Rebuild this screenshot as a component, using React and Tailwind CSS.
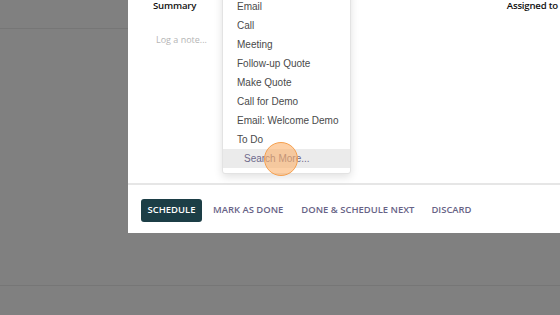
const TYPES = ['Email', 'Call', 'Meeting', 'Follow-up Quote', 'Make Quote', 'Call for Demo', 'Email: Welcome Demo', 'To Do']

export default function App() {
  return (
    <div className="relative w-[560px] h-[315px] overflow-hidden bg-[#808080]" style={{ fontFamily: '"Open Sans", sans-serif' }}>
      {/* page behind the backdrop */}
      <div className="h-[29px] border-b border-[#767676]" />
      <div className="h-[257px] border-b border-[#767676]" />

      {/* activity dialog */}
      <div className="absolute left-[128px] top-[-20px] right-[-20px] h-[253px] bg-white flex flex-col">
        <div className="relative h-[205px] border-b-2 border-[#e6e6e6]">
          <div className="flex items-start pt-[17px] pl-[25px] pr-[20px]">
            <span className="text-[9.6px] text-[#111] font-semibold leading-[18px] tracking-[-0.2px]">Summary</span>
            <span className="ml-auto mr-[2px] text-[9.6px] text-[#111] font-semibold leading-[18px] tracking-[-0.2px]">Assigned to</span>
          </div>
          <div className="pl-[28px] mt-[18px] text-[9px] text-[#b5b5b5] leading-[14px]">Log a note...</div>

          {/* activity type dropdown */}
          <div
            className="absolute left-[94px] top-[6px] w-[129px] bg-white border border-[#e3e3e3] rounded-[3px] shadow-[0_3px_8px_rgba(0,0,0,0.12)] pt-[10px] pb-[5px]"
            style={{ fontFamily: '"Liberation Sans", Arial, sans-serif' }}
          >
            {TYPES.map(t => (
              <div key={t} className="h-[19px] pl-[14px] flex items-center text-[10px] text-[#4a4a4a]">{t}</div>
            ))}
            <div className="relative h-[19px] pl-[21px] flex items-center text-[10px] text-[#6f6a8c] bg-[#ebebeb]">
              Search More...
              <div className="absolute left-[41px] top-[-7px] w-[34px] h-[34px] rounded-full bg-[#fbb06b]/60 border border-[#f5a04f]" />
            </div>
          </div>
        </div>

        <div className="flex items-center pl-[13px] pt-[14px] text-[9.45px] font-semibold">
          <button className="h-[23px] w-[61px] rounded-[3px] bg-[#1c3e46] text-white">SCHEDULE</button>
          <button className="h-[23px] ml-[11px] text-[#676386]">MARK AS DONE</button>
          <button className="h-[23px] ml-[18px] text-[#676386]">DONE &amp; SCHEDULE NEXT</button>
          <button className="h-[23px] ml-[17px] text-[#676386]">DISCARD</button>
        </div>
      </div>
    </div>
  )
}
